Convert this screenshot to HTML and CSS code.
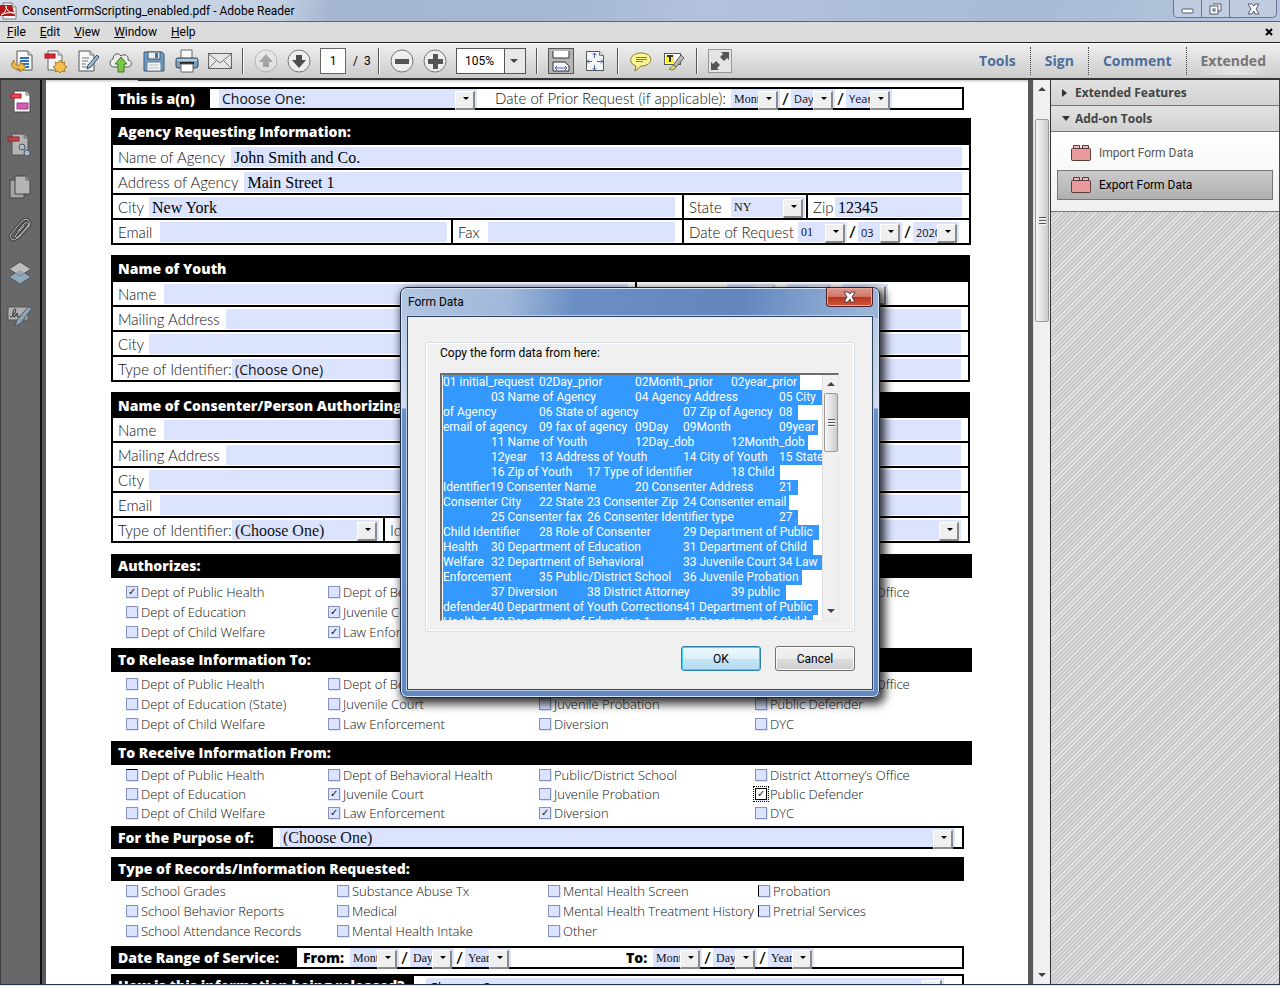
FILE: index.html
```html
<!DOCTYPE html>
<html lang="en">
<head>
    <meta charset="UTF-8">
    <meta name="viewport" content="width=device-width, initial-scale=1.0">
    <title>ConsentFormScripting_enabled.pdf - Adobe Reader</title>
    <link rel="stylesheet" href="styles.css">
</head>
<body>

    <header class="titlebar">
        <svg class="app-icon" width="17" height="18" viewBox="0 0 17 18"><path d="M3 1h9l4 4v12H3z" fill="#f4f4f4" stroke="#777"/><path d="M12 1v4h4" fill="#ddd" stroke="#888"/><path d="M0 3h12l3 11H0z" fill="#b3161b"/><path d="M1 13c4-2 6-6 5-9 0 4 4 7 8 7-5-1-9 0-13 2z" fill="none" stroke="#fff"/></svg>
        <span class="title">ConsentFormScripting_enabled.pdf - Adobe Reader</span>
        <div class="window-controls">
            <button aria-label="Minimize"><svg width="13" height="12" viewBox="0 0 13 12"><rect x="1" y="6" width="11" height="4" rx="1" fill="#fff" stroke="#4f5a70"/></svg></button>
            <button aria-label="Restore"><svg width="13" height="12" viewBox="0 0 13 12"><path d="M4 1h8v7H9" fill="#fff" stroke="#4f5a70"/><rect x="1" y="3" width="8" height="8" fill="#fff" stroke="#4f5a70"/><rect x="4" y="6" width="2" height="2" fill="#fff" stroke="#4f5a70"/></svg></button>
            <button class="close" aria-label="Close"><svg width="13" height="12" viewBox="0 0 13 12"><path d="M1 1h4l2 2 1-2h4L9 6l3 5H8L7 8l-2 3H1l3-5z" fill="#fff" stroke="#4f5a70"/></svg></button>
        </div>
    </header>

    <nav class="menubar">
        <button><u>F</u>ile</button>
        <button><u>E</u>dit</button>
        <button><u>V</u>iew</button>
        <button><u>W</u>indow</button>
        <button><u>H</u>elp</button>
        <button class="menu-close" aria-label="Close document"><svg width="8" height="8" viewBox="0 0 8 8"><path d="M1 1l6 6M7 1L1 7" stroke="#000" stroke-width="2"/></svg></button>
    </nav>

    <div class="toolbar">
        <button class="tool" aria-label="Open"><svg width="24" height="24" viewBox="0 0 24 24"><path d="M7 2h11l4 4v15H7z" fill="#f8f8f8" stroke="#555"/><path d="M18 2v4h4" fill="#ddd" stroke="#777"/><path d="M10 9h9M10 12h9M12 15h7M13 18h6" stroke="#2f6fc0" stroke-width="2"/><path d="M4 11c-5 5-2 10 6 9v3l6-5-6-5v3c-4 1-6-1-6-5z" fill="#f3bc45" stroke="#a3751a"/></svg></button>
        <button class="tool" aria-label="Create PDF"><svg width="24" height="24" viewBox="0 0 24 24"><path d="M5 2h10l4 4v15H5z" fill="#f4f4f4" stroke="#666"/><path d="M15 2v4h4" fill="#ddd" stroke="#888"/><rect x="2" y="5" width="10" height="4" fill="#e0252f" stroke="#9d1b22"/><path d="M17 11l2 3 3-1-1 3 3 2-3 2 1 3-3-1-2 2-2-2-3 1 1-3-3-2 3-2-1-3 3 1z" fill="#f5bf52" stroke="#b07c22"/></svg></button>
        <button class="tool" aria-label="Edit"><svg width="24" height="24" viewBox="0 0 24 24"><path d="M3 2h11l4 4v16H3z" fill="#f6f6f6" stroke="#555"/><path d="M14 2v4h4" fill="#ddd" stroke="#777"/><path d="M6 9h7M6 12h6M6 15h4M6 18h9" stroke="#777"/><path d="M21 6l2 2-8 10-4 2 1-4z" fill="#9cb8cf" stroke="#3d5468"/></svg></button>
        <button class="tool" aria-label="Upload"><svg width="24" height="24" viewBox="0 0 24 24"><path d="M5 18c-5 0-5-7-1-8 0-5 5-7 8-3 4-3 8 0 7 4 5 1 4 7 0 7z" fill="#eee" stroke="#555"/><path d="M12 8l6 7h-3v8H9v-8H6z" fill="#7cc64a" stroke="#3c7d1d"/></svg></button>
        <button class="tool" aria-label="Save"><svg width="24" height="24" viewBox="0 0 24 24"><path d="M2 3h18l2 2v17H2z" fill="#6e9cc4" stroke="#345a7c"/><rect x="6" y="3" width="12" height="7" fill="#e8eef3" stroke="#456"/><rect x="13" y="4" width="3" height="5" fill="#456f96"/><rect x="5" y="13" width="14" height="9" fill="#f6f6f6" stroke="#678"/><path d="M7 16h10M7 19h10" stroke="#bbb"/></svg></button>
        <button class="tool" aria-label="Print"><svg width="24" height="24" viewBox="0 0 24 24"><path d="M6 1h11v10H6z" fill="#fafafa" stroke="#666"/><rect x="1" y="9" width="22" height="10" rx="2" fill="#7b9fbf" stroke="#34495c"/><path d="M2 11h20" stroke="#b3cce0" stroke-width="2"/><path d="M5 14h14" stroke="#222" stroke-width="2"/><path d="M6 15h12v8H6z" fill="#fff" stroke="#666"/></svg></button>
        <button class="tool" aria-label="Email"><svg width="24" height="24" viewBox="0 0 24 24"><rect x="0.500" y="4.500" width="23" height="15" fill="#e6e6e6" stroke="#666"/><path d="M1 5l11 9 11-9M1 19l8-8M23 19l-8-8" fill="none" stroke="#777"/></svg></button>
        <span class="sep"></span>
        <button class="tool faded" aria-label="Previous page"><svg width="24" height="24" viewBox="0 0 24 24"><circle cx="12" cy="12" r="11" fill="#eee" stroke="#777"/><path d="M12 5l7 8h-4v5H9v-5H5z" fill="#555"/></svg></button>
        <button class="tool" aria-label="Next page"><svg width="24" height="24" viewBox="0 0 24 24"><circle cx="12" cy="12" r="11" fill="#eee" stroke="#777"/><path d="M12 19l7-8h-4V6H9v5H5z" fill="#4d4d4d"/></svg></button>
        <div class="pager">
            <input type="text" value="1" aria-label="Page number">
            <span>/&nbsp; 3</span>
        </div>
        <span class="sep"></span>
        <button class="tool" aria-label="Zoom out"><svg width="24" height="24" viewBox="0 0 24 24"><circle cx="12" cy="12" r="11" fill="#eee" stroke="#777"/><rect x="5" y="10" width="14" height="5" fill="#555"/></svg></button>
        <button class="tool" aria-label="Zoom in"><svg width="24" height="24" viewBox="0 0 24 24"><circle cx="12" cy="12" r="11" fill="#eee" stroke="#777"/><path d="M10 5h5v5h5v5h-5v5h-5v-5H5v-5h5z" fill="#555"/></svg></button>
        <div class="zoom-box">
            <select aria-label="Zoom level"><option>105%</option></select>
        </div>
        <span class="sep"></span>
        <button class="tool pressed" aria-label="Fit width"><svg width="24" height="24" viewBox="0 0 24 24"><path d="M4 2v7h16V2" fill="#fff" stroke="#333"/><path d="M4 22v-9h12l4 4v5z" fill="#f6f6f6" stroke="#333"/><path d="M6 19h12M8 17l-2 2 2 2M16 17l2 2-2 2" fill="none" stroke="#3f66b5"/></svg></button>
        <button class="tool" aria-label="Fit page"><svg width="24" height="24" viewBox="0 0 24 24"><path d="M3.500 2.500h13l4 4v15h-17z" fill="#f4f6fa" stroke="#555"/><path d="M16.500 2.500v4h4" fill="#ddd" stroke="#777"/><path d="M11.500 4v5M11.500 16v5M4 12.500h5M14 12.500h6M9.500 6l2-2 2 2M9.500 19l2 2 2-2M6 10.500l-2 2 2 2M18 10.500l2 2-2 2" fill="none" stroke="#3f66b5"/></svg></button>
        <span class="sep"></span>
        <button class="tool" aria-label="Add note"><svg width="24" height="24" viewBox="0 0 24 24"><path d="M12 4c13 0 13 13 0 13l-6 5 1-5C-2 14 1 4 12 4z" fill="#fbf494" stroke="#8a8028"/><path d="M7 8.500h11M7 10.500h11M7 12.500h7" stroke="#777"/></svg></button>
        <button class="tool" aria-label="Highlight text"><svg width="24" height="24" viewBox="0 0 24 24"><rect x="2.500" y="4.500" width="16" height="11" fill="#fff" stroke="#555"/><rect x="4" y="6" width="8" height="8" fill="#ffee2e"/><path d="M5 7h6M8 7v6" stroke="#333" stroke-width="2"/><path d="M19 6l3 3-8 9-3 1 1-4z" fill="#bbb" stroke="#555"/><path d="M7 20l5-4 2 3-4 2z" fill="#eee03c" stroke="#777"/></svg></button>
        <span class="sep"></span>
        <button class="tool" aria-label="Read mode"><svg width="24" height="24" viewBox="0 0 24 24"><rect x="0.500" y="0.500" width="23" height="23" fill="#e4e4e4" stroke="#999"/><path d="M13 3h8v8l-2-2-3 3-4-4 3-3zM3 13v8h8l-2-2 3-3-4-4-3 3z" fill="#555"/></svg></button>
        <div class="panes">
            <button>Tools</button>
            <button>Sign</button>
            <button>Comment</button>
            <button class="current">Extended</button>
        </div>
    </div>

    <main class="workspace">
        <nav class="rail">
            <button aria-label="Form"><svg width="24" height="24" viewBox="0 0 24 24"><path d="M5 2h12l4 4v17H5z" fill="#fff" stroke="#444"/><path d="M17 2v4h4" fill="#ddd" stroke="#777"/><rect x="2" y="5" width="10" height="4" fill="#f8414b" stroke="#b51e28"/><rect x="8" y="14" width="11" height="6" fill="#d25fb4" stroke="#963c80"/></svg></button>
            <button aria-label="Shared"><svg width="24" height="24" viewBox="0 0 24 24"><path d="M3 2h12l4 4v17H3z" fill="#b4b4b4" stroke="#555"/><path d="M15 2v4h4" fill="#999" stroke="#777"/><rect x="-1" y="5" width="11" height="4" fill="#c0464c" stroke="#84272c"/><path d="M13 15l5 5" stroke="#7f98ab" stroke-width="3"/><circle cx="13" cy="15" r="3" fill="#a9bccb" stroke="#556"/><circle cx="18" cy="21" r="3" fill="#a9bccb" stroke="#556"/></svg></button>
            <button aria-label="Pages"><svg width="24" height="24" viewBox="0 0 24 24"><path d="M1 5h14v18H1z" fill="#a4a4a4" stroke="#444"/><path d="M6 1h11l4 4v14H6z" fill="#b4b4b4" stroke="#444"/><path d="M17 1v4h4" fill="#999" stroke="#666"/></svg></button>
            <button aria-label="Attachments"><svg width="24" height="24" viewBox="0 0 24 24"><g fill="none" stroke-linecap="round"><path d="M9 13l6-7c3-3 6 0 4 2L8 20c-3 4-9 1-6-4L13 3c4-4 10 0 7 5L10 19c-2 2-5 0-3-2l8-9" stroke="#444" stroke-width="3"/><path d="M9 13l6-7c3-3 6 0 4 2L8 20c-3 4-9 1-6-4L13 3c4-4 10 0 7 5L10 19c-2 2-5 0-3-2l8-9" stroke="#c0c0c0"/></g></svg></button>
            <button aria-label="Layers"><svg width="24" height="24" viewBox="0 0 24 24"><path d="M11 9l11 7-11 7L0 16z" fill="#8fa8bb" stroke="#4c5a66"/><path d="M11 1l11 7-11 7L0 8z" fill="#bdbdbd" stroke="#555"/><path d="M11 9l5 3-5 3-5-3z" fill="#93a6b4"/></svg></button>
            <button aria-label="Signatures"><svg width="24" height="24" viewBox="0 0 24 24"><rect x="-1" y="3" width="20" height="13" fill="#b0b0b0" stroke="#555"/><path d="M1 13c5-1 7-8 5-8s-3 8-1 8 2-4 3-4-1 4 1 4 2-2 5-3" fill="none" stroke="#222"/><path d="M19 3l4 1-11 15-6 3 2-6z" fill="#8fa5b5" stroke="#4b5963"/></svg></button>
        </nav>

        <div class="viewer">
            <div class="page">
                <div class="clipped-mark"></div>

                <div class="strip first">
                    <h2>This is a(n)</h2>
                    <div class="strip-body">
                        <span class="combo wide sans"><select aria-label="Type of request"><option>Choose One:</option></select></span>
                        <span class="prior">Date of Prior Request (if applicable):</span>
                        <div class="date">
                            <span class="combo"><select aria-label="Prior month"><option>Month</option></select></span><i>/</i>
                            <span class="combo day sans"><select aria-label="Prior day"><option>Day</option></select></span><i>/</i>
                            <span class="combo year sans"><select aria-label="Prior year"><option>Year</option></select></span>
                        </div>
                    </div>
                </div>

                <section class="block agency">
                    <h2>Agency Requesting Information:</h2>
                    <div class="row">
                        <div class="cell"><label for="agency">Name of Agency</label><input id="agency" type="text" value="John Smith and Co."></div>
                    </div>
                    <div class="row">
                        <div class="cell"><label for="agency-address">Address of Agency</label><input id="agency-address" type="text" value="Main Street 1"></div>
                    </div>
                    <div class="row">
                        <div class="cell"><label class="short" for="agency-city">City</label><input id="agency-city" type="text" value="New York"></div>
                        <div class="cell state"><label for="state">State</label><span class="combo"><select id="state"><option>NY</option></select></span></div>
                        <div class="cell zip"><label for="zip">Zip</label><input id="zip" type="text" value="12345"></div>
                    </div>
                    <div class="row">
                        <div class="cell email"><label class="mid" for="agency-email">Email</label><input id="agency-email" type="text"></div>
                        <div class="cell fax"><label for="fax">Fax</label><input id="fax" type="text"></div>
                        <div class="cell request">
                            <span class="text">Date of Request</span>
                            <div class="date">
                                <span class="combo"><select aria-label="Request month"><option>01</option></select></span><i>/</i>
                                <span class="combo day sans"><select aria-label="Request day"><option>03</option></select></span><i>/</i>
                                <span class="combo year sans"><select aria-label="Request year"><option>2020</option></select></span>
                            </div>
                        </div>
                    </div>
                </section>

                <section class="block youth">
                    <h2>Name of Youth</h2>
                    <div class="row">
                        <div class="cell"><label class="name" for="youth">Name</label><input id="youth" type="text"></div>
                        <div class="cell birth">
                            <div class="date">
                                <span class="combo"><select aria-label="Birth month"><option></option></select></span><i>/</i>
                                <span class="combo day"><select aria-label="Birth day"><option></option></select></span><i>/</i>
                                <span class="combo year"><select aria-label="Birth year"><option></option></select></span>
                            </div>
                        </div>
                    </div>
                    <div class="row">
                        <div class="cell"><label for="youth-address">Mailing Address</label><input id="youth-address" type="text"></div>
                    </div>
                    <div class="row">
                        <div class="cell"><label class="short" for="youth-city">City</label><input id="youth-city" type="text"></div>
                    </div>
                    <div class="row">
                        <div class="cell"><label class="type" for="youth-id">Type of Identifier:</label><span class="combo fill sans"><select id="youth-id"><option>(Choose One)</option></select></span></div>
                        <div class="cell half"><input type="text" aria-label="Youth identifier"></div>
                    </div>
                </section>

                <section class="block consenter">
                    <h2>Name of Consenter/Person Authorizing:</h2>
                    <div class="row">
                        <div class="cell"><label class="name" for="consenter">Name</label><input id="consenter" type="text"></div>
                    </div>
                    <div class="row">
                        <div class="cell"><label for="consenter-address">Mailing Address</label><input id="consenter-address" type="text"></div>
                    </div>
                    <div class="row">
                        <div class="cell"><label class="short" for="consenter-city">City</label><input id="consenter-city" type="text"></div>
                    </div>
                    <div class="row">
                        <div class="cell"><label class="mid" for="consenter-email">Email</label><input id="consenter-email" type="text"></div>
                    </div>
                    <div class="row">
                        <div class="cell id-type"><label class="type" for="consenter-id">Type of Identifier:</label><span class="combo fill"><select id="consenter-id"><option>(Choose One)</option></select></span></div>
                        <div class="cell"><label for="role">Identifier</label><span class="combo fill"><select id="role"><option></option></select></span></div>
                    </div>
                </section>

                <section class="checks authorizes">
                    <h2>Authorizes:</h2>
                    <div class="grid">
                        <label><input type="checkbox" checked>Dept of Public Health</label>
                        <label><input type="checkbox">Dept of Behavioral Health</label>
                        <label><input type="checkbox">Public/District School</label>
                        <label><input type="checkbox">District Attorney’s Office</label>
                        <label><input type="checkbox">Dept of Education</label>
                        <label><input type="checkbox" checked>Juvenile Court</label>
                        <label><input type="checkbox">Juvenile Probation</label>
                        <label><input type="checkbox">Public Defender</label>
                        <label><input type="checkbox">Dept of Child Welfare</label>
                        <label><input type="checkbox" checked>Law Enforcement</label>
                        <label><input type="checkbox">Diversion</label>
                        <label><input type="checkbox">DYC</label>
                    </div>
                </section>

                <section class="checks release">
                    <h2>To Release Information To:</h2>
                    <div class="grid">
                        <label><input type="checkbox">Dept of Public Health</label>
                        <label><input type="checkbox">Dept of Behavioral Health</label>
                        <label><input type="checkbox">Public/District School</label>
                        <label><input type="checkbox">District Attorney’s Office</label>
                        <label><input type="checkbox">Dept of Education (State)</label>
                        <label><input type="checkbox">Juvenile Court</label>
                        <label><input type="checkbox">Juvenile Probation</label>
                        <label><input type="checkbox">Public Defender</label>
                        <label><input type="checkbox">Dept of Child Welfare</label>
                        <label><input type="checkbox">Law Enforcement</label>
                        <label><input type="checkbox">Diversion</label>
                        <label><input type="checkbox">DYC</label>
                    </div>
                </section>

                <section class="checks receive">
                    <h2>To Receive Information From:</h2>
                    <div class="grid">
                        <label><input class="edge-top" type="checkbox">Dept of Public Health</label>
                        <label><input type="checkbox">Dept of Behavioral Health</label>
                        <label><input type="checkbox">Public/District School</label>
                        <label><input type="checkbox">District Attorney’s Office</label>
                        <label><input type="checkbox">Dept of Education</label>
                        <label><input type="checkbox" checked>Juvenile Court</label>
                        <label><input type="checkbox">Juvenile Probation</label>
                        <label><input class="focused" type="checkbox" checked>Public Defender</label>
                        <label><input type="checkbox">Dept of Child Welfare</label>
                        <label><input type="checkbox" checked>Law Enforcement</label>
                        <label><input type="checkbox" checked>Diversion</label>
                        <label><input type="checkbox">DYC</label>
                    </div>
                </section>

                <div class="strip purpose">
                    <h2>For the Purpose of:</h2>
                    <div class="strip-body">
                        <span class="combo fill"><select aria-label="Purpose"><option>(Choose One)</option></select></span>
                    </div>
                </div>

                <section class="checks records">
                    <h2>Type of Records/Information Requested:</h2>
                    <div class="grid">
                        <label><input type="checkbox">School Grades</label>
                        <label><input type="checkbox">Substance Abuse Tx</label>
                        <label><input type="checkbox">Mental Health Screen</label>
                        <label><input class="edge-left" type="checkbox">Probation</label>
                        <label><input type="checkbox">School Behavior Reports</label>
                        <label><input type="checkbox">Medical</label>
                        <label><input type="checkbox">Mental Health Treatment History</label>
                        <label><input class="edge-left" type="checkbox">Pretrial Services</label>
                        <label><input type="checkbox">School Attendance Records</label>
                        <label><input type="checkbox">Mental Health Intake</label>
                        <label><input type="checkbox">Other</label>
                    </div>
                </section>

                <div class="strip range">
                    <h2>Date Range of Service:</h2>
                    <div class="strip-body">
                        <b>From:</b>
                        <div class="date">
                            <span class="combo"><select aria-label="From month"><option>Month</option></select></span><i>/</i>
                            <span class="combo day"><select aria-label="From day"><option>Day</option></select></span><i>/</i>
                            <span class="combo year"><select aria-label="From year"><option>Year</option></select></span>
                        </div>
                        <b class="to">To:</b>
                        <div class="date">
                            <span class="combo"><select aria-label="To month"><option>Month</option></select></span><i>/</i>
                            <span class="combo day"><select aria-label="To day"><option>Day</option></select></span><i>/</i>
                            <span class="combo year"><select aria-label="To year"><option>Year</option></select></span>
                        </div>
                    </div>
                </div>

                <div class="strip how">
                    <h2>How is this information being released?</h2>
                    <div class="strip-body">
                        <span class="combo fill sans"><select aria-label="How released"><option>Choose One:</option></select></span>
                    </div>
                </div>
            </div>
            <div class="scrollbar">
                <span class="arrow up"></span>
                <span class="thumb"></span>
                <span class="arrow down"></span>
            </div>
        </div>

        <aside class="side">
            <button class="side-head"><span class="tri right"></span>Extended Features</button>
            <button class="side-head"><span class="tri"></span>Add-on Tools</button>
            <div class="side-list">
                <button><svg width="20" height="16" viewBox="0 0 20 16"><path d="M2.500 4V0.500h6V4M11.500 4V0.500h6V4" fill="#f3b9b9" stroke="#5b3a3c"/><rect x="0.500" y="3.500" width="19" height="12" rx="1" fill="#e99a9c" stroke="#5b3a3c"/></svg>Import Form Data</button>
                <button class="active"><svg width="20" height="16" viewBox="0 0 20 16"><path d="M2.500 4V0.500h6V4M11.500 4V0.500h6V4" fill="#f3b9b9" stroke="#5b3a3c"/><rect x="0.500" y="3.500" width="19" height="12" rx="1" fill="#e99a9c" stroke="#5b3a3c"/></svg>Export Form Data</button>
            </div>
        </aside>
    </main>

    <div class="dialog" role="dialog" aria-label="Form Data">
        <div class="dialog-title">
            <span>Form Data</span>
            <button aria-label="Close dialog"><svg width="13" height="12" viewBox="0 0 13 12"><path d="M1 1h4l2 2 1-2h4L9 6l3 5H8L7 8l-2 3H1l3-5z" fill="#fff" stroke="#5b3a42"/></svg></button>
        </div>
        <div class="dialog-body">
            <div class="group">
                <label for="data">Copy the form data from here:</label>
                <div class="text-frame">
<textarea id="data" readonly wrap="off">01 initial_request	02Day_prior	02Month_prior	02year_prior
	03 Name of Agency	04 Agency Address	05 City 
of Agency	06 State of agency	07 Zip of Agency	08 
email of agency	09 fax of agency	09Day	09Month	09year
	11 Name of Youth	12Day_dob	12Month_dob
	12year	13 Address of Youth	14 City of Youth	15 State
	16 Zip of Youth	17 Type of Identifier	18 Child 
Identifier19 Consenter Name	20 Consenter Address	21 
Consenter City	22 State	23 Consenter Zip	24 Consenter email
	25 Consenter fax	26 Consenter Identifier type	27 
Child Identifier	28 Role of Consenter	29 Department of Public 
Health	30 Department of Education	31 Department of Child 
Welfare	32 Department of Behavioral	33 Juvenile Court	34 Law 
Enforcement	35 Public/District School	36 Juvenile Probation
	37 Diversion	38 District Attorney	39 public 
defender40 Department of Youth Corrections41 Department of Public 
Health 1	42 Department of Education 1	43 Department of Child 
</textarea>
                    <div class="scrollbar small">
                        <span class="arrow up"></span>
                        <span class="thumb"></span>
                        <span class="arrow down"></span>
                    </div>
                </div>
            </div>
            <div class="actions">
                <button class="default">OK</button>
                <button>Cancel</button>
            </div>
        </div>
    </div>

    <script>
        // the data is ready to copy as soon as the dialog opens
        var data = document.getElementById("data");
        data.focus();
        data.setSelectionRange(0, data.value.length);
        data.scrollTop = 0;
    </script>
</body>
</html>
```
FILE: styles.css
```css
* {
    box-sizing: border-box;
}

body {
    margin: 0;
    height: 100vh;
    display: flex;
    flex-direction: column;
    overflow: hidden;
    font-family: Roboto, "Open Sans", sans-serif;
    font-size: 12px;
    color: #000;
    background: #c5d3e6;
    border-bottom: 1px solid #dfe6f0;
}

button, input, select, textarea {
    font: inherit;
    color: inherit;
    margin: 0;
    padding: 0;
    border: 0;
    border-radius: 0;
    background: none;
    outline: 0;
}

h2 {
    margin: 0;
    padding: 0 7px;
    font-family: "Open Sans", sans-serif;
    font-size: 14px;
    font-weight: 800;
    line-height: 24px;
    color: #fff;
    background: #000;
    white-space: nowrap;
}

/* title bar */
.titlebar {
    display: flex;
    align-items: center;
    flex: none;
    height: 22px;
    border-bottom: 1px solid #5a6378;
    background: linear-gradient(100deg, #d3dce8 0, #c3d0e2 22%, #a3b5cf 26%, #a6b8d2 45%, #b2c2dc 55%, #a8bad6 80%, #a9bbd5 82%, #b6c6de 100%);
}

.title {
    margin-left: 5px;
    flex: 1;
}

.window-controls {
    display: flex;
    align-self: flex-start;
    height: 18px;
    margin-right: 3px;
    border: 1px solid #68758d;
    border-top: 0;
    border-radius: 0 0 5px 5px;
    background: #c0cde0;
}

.window-controls button {
    width: 28px;
    border-right: 1px solid #68758d;
    line-height: 0;
}

.window-controls .close {
    width: 46px;
    border: 0;
}

/* menu */
.menubar {
    display: flex;
    flex: none;
    height: 21px;
    padding: 0 7px;
    gap: 14px;
    background: #dcdcdc;
    border-bottom: 1px solid #222;
}

.menubar .menu-close {
    margin-left: auto;
}

/* toolbar */
.toolbar {
    display: flex;
    align-items: center;
    flex: none;
    gap: 9px;
    height: 37px;
    padding-left: 10px;
    border-bottom: 2px solid #333;
    box-shadow: inset 0 1px 0 #fff;
    background: linear-gradient(#f0f0f0, #cbcbcb);
}

.tool {
    flex: none;
    width: 24px;
    height: 24px;
    line-height: 0;
}

.tool.faded {
    opacity: 0.4;
}

.tool.pressed {
    width: 26px;
    height: 26px;
    border: 1px solid #555;
    background: #b5b5b5;
}

.sep {
    width: 2px;
    height: 26px;
    margin: 0 1px;
    border-left: 1px solid #555;
    border-right: 1px solid #f8f8f8;
}

.pager {
    display: flex;
    align-items: center;
    gap: 7px;
}

.pager input {
    width: 26px;
    height: 26px;
    border: 1px solid #666;
    background: #fff;
    text-align: center;
}

.pager span {
    width: 15px;
    white-space: nowrap;
}

.zoom-box {
    position: relative;
    width: 70px;
    height: 26px;
    border: 1px solid #555;
    background: linear-gradient(90deg, #fff 47px, #555 47px, #555 48px, #e8e8e8 48px);
}

.zoom-box select {
    appearance: none;
    width: 100%;
    height: 24px;
    padding-left: 8px;
}

.zoom-box::after {
    content: "";
    position: absolute;
    right: 7px;
    top: 10px;
    border: 4px solid transparent;
    border-top-color: #444;
    border-bottom: 0;
    pointer-events: none;
}

.panes {
    display: flex;
    margin-left: auto;
    height: 28px;
}

.panes button {
    padding: 0 14px;
    font-family: "Open Sans", sans-serif;
    font-size: 14px;
    font-weight: 700;
    color: #4b6d9c;
    border-left: 1px dotted #444;
}

.panes button:first-child {
    border: 0;
}

.panes .current {
    color: #757575;
    background: radial-gradient(ellipse at 50% 120%, #ececec, transparent 60%);
}

/* workspace */
.workspace {
    display: flex;
    flex: 1;
    min-height: 0;
    border-bottom: 1px solid #26364f;
}

.rail {
    display: flex;
    flex-direction: column;
    align-items: center;
    flex: none;
    gap: 19px;
    width: 42px;
    padding: 9px 0;
    background: #686868;
    border-left: 1px solid #3c3c3c;
    border-right: 2px solid #111;
}

.rail button {
    width: 24px;
    height: 24px;
    line-height: 0;
}

.rail svg {
    overflow: visible;
}

.viewer {
    display: flex;
    flex: 1;
    min-width: 0;
    padding-left: 4px;
    background: #595959;
    overflow: hidden;
}

.page {
    flex: 1;
    min-width: 0;
    padding: 0 56px 0 65px;
    margin-right: 5px;
    background: #fff;
    box-shadow: inset 0 3px 3px -2px #bbb;
    font-family: Lato, "Open Sans", sans-serif;
    font-size: 15px;
    font-weight: 300;
    color: #111;
}

.clipped-mark {
    width: 22px;
    height: 1px;
    margin-left: 27px;
    background: #333;
}

/* one-line boxes with a black caption */
.strip {
    display: flex;
    margin-right: 8px;
    height: 23px;
    border: 2px solid #000;
    border-left: 0;
}

.strip h2 {
    line-height: 20px;
}

.strip-body {
    display: flex;
    flex: 1;
    min-width: 0;
    align-items: stretch;
}

.strip.first {
    margin-top: 6px;
    padding: 0;
}

.first h2 {
    width: 99px;
    margin: -2px 0;
    line-height: 23px;
}

.first .strip-body {
    padding-left: 9px;
}

.first .date {
    margin-left: 9px;
}

.prior {
    width: 227px;
    margin-left: 18px;
    line-height: 19px;
    white-space: nowrap;
}

.purpose h2 {
    width: 162px;
}

.purpose .strip-body {
    padding: 0 7px;
}

.range h2 {
    width: 186px;
}

.range b {
    width: 47px;
    margin-left: 6px;
    font-family: "Open Sans", sans-serif;
    font-size: 14px;
    font-weight: 800;
    line-height: 19px;
    color: #000;
}

.range .to {
    width: 27px;
    margin-left: 115px;
}

.how h2 {
    width: 303px;
}

.how .strip-body {
    padding: 2px 18px 0 12px;
}

/* bordered blocks of rows */
.block {
    border-left: 2px solid #000;
    border-right: 2px solid #000;
    margin-right: 1px;
}

.block h2 {
    height: 27px;
    padding: 0 5px;
    line-height: 28px;
}

.agency {
    margin-top: 8px;
}

.youth {
    margin: 10px 2px 0 0;
}

.consenter {
    margin: 10px 2px 0 0;
}

.consenter h2 {
    height: 26px;
}

.row {
    display: flex;
    height: 25px;
    border-bottom: 2px solid #000;
}

.cell {
    display: flex;
    flex: 1;
    min-width: 0;
    padding: 2px 7px 1px 5px;
}

.cell + .cell {
    border-left: 2px solid #000;
}

.cell label, .cell .text {
    flex: none;
    margin-right: 6px;
    line-height: 20px;
    white-space: nowrap;
}

.cell .short {
    width: 25px;
}

.cell .mid {
    width: 36px;
}

.cell .name {
    width: 40px;
}

.cell .type {
    width: 112px;
    margin-right: 2px;
}

.cell > input {
    flex: 1;
    min-width: 0;
    height: 20px;
    padding: 1px 3px 0;
    background: #dbe3ff;
    font-family: "Liberation Serif", serif;
    font-size: 16px;
    font-weight: 400;
    color: #000;
}

.cell.state {
    flex: none;
    width: 124px;
    padding-right: 1px;
}

.cell.state label {
    width: 36px;
}

.state .combo {
    flex: 1;
}

.cell.zip {
    flex: none;
    width: 163px;
}

.cell.zip label {
    width: 21px;
    margin-right: 1px;
}

.cell.email {
    flex: none;
    width: 338px;
    padding-right: 4px;
}

.cell.fax label {
    width: 24px;
}

.cell.request {
    flex: none;
    width: 287px;
}

.request .text {
    width: 103px;
}

.cell.birth {
    flex: none;
    width: 333px;
    padding-left: 90px;
}

.cell.half {
    flex: none;
    width: 333px;
}

.cell.id-type {
    flex: none;
    width: 270px;
    padding-right: 4px;
}

/* drop-downs of the form */
.combo {
    position: relative;
    display: flex;
    flex: none;
    width: 49px;
    background: #dbe3ff;
    font-family: "Liberation Serif", serif;
    font-size: 12px;
    font-weight: 400;
    color: #111;
}

.combo.day {
    width: 44px;
}

.combo.year {
    width: 46px;
}

.combo.wide {
    width: 258px;
}

.combo.fill {
    flex: 1;
    width: auto;
    font-size: 16px;
}

.combo.sans {
    font-family: "Open Sans", sans-serif;
    font-size: 11px;
}

.combo.wide.sans, .combo.fill.sans {
    font-size: 14px;
}

.combo select {
    appearance: none;
    flex: 1;
    min-width: 0;
    width: 100%;
    padding: 0 12px 0 3px;
}

.combo::before {
    content: "";
    position: absolute;
    right: 2px;
    top: 2px;
    width: 17px;
    height: 16px;
    border: 1px solid #fff;
    border-right: 2px solid #8a8a8a;
    border-bottom: 2px solid #8a8a8a;
    background: #efefef;
    pointer-events: none;
}

.combo::after {
    content: "";
    position: absolute;
    right: 8px;
    top: 8px;
    border: 3px solid transparent;
    border-top-color: #000;
    border-bottom: 0;
    pointer-events: none;
}

.date {
    display: flex;
    flex: none;
}

.date i {
    width: 11px;
    text-align: center;
    line-height: 19px;
    font-style: normal;
    font-weight: 700;
    color: #000;
}

/* check boxes */
.checks.authorizes {
    margin-top: 11px;
}

.grid {
    display: grid;
    grid-template-columns: 202px 211px 216px 1fr;
    grid-auto-rows: 20px;
    padding-left: 15px;
    font-family: "Open Sans", sans-serif;
    font-size: 13px;
}

.authorizes .grid {
    padding-top: 4px;
    padding-bottom: 6px;
}

.release .grid {
    padding-top: 2px;
    padding-bottom: 7px;
}

.receive .grid {
    grid-auto-rows: 19px;
    padding-bottom: 4px;
}

.records {
    margin: 8px 8px 0 0;
}

.records .grid {
    grid-template-columns: 211px 211px 210px 1fr;
    padding-bottom: 5px;
}

.grid label {
    display: flex;
    align-items: center;
    gap: 3px;
    white-space: nowrap;
}

.grid input {
    appearance: none;
    position: relative;
    flex: none;
    width: 12px;
    height: 12px;
    border: 1px solid #8590bd;
    background: #dbe3ff;
    box-shadow: 1px 1px 0 #dbe3ff;
}

.grid input:checked::after {
    content: "✓";
    position: absolute;
    left: 1px;
    top: -1px;
    font-family: "DejaVu Sans", sans-serif;
    font-size: 10px;
    font-weight: 700;
    line-height: 12px;
    color: #111;
}

.grid .edge-top {
    border-top-color: #000;
}

.grid .edge-left {
    border-left-color: #000;
}

.grid .focused {
    border-color: #000;
    background: #fff;
    outline: 1px dotted #000;
    outline-offset: 1px;
}

.records + .strip {
    margin-bottom: 5px;
}

/* scroll bars */
.scrollbar {
    display: flex;
    flex-direction: column;
    align-items: center;
    flex: none;
    width: 17px;
    padding: 7px 0;
    background: #f0f0f0;
    border-left: 1px solid #ddd;
}

.thumb {
    position: relative;
    width: 14px;
    height: 203px;
    margin-top: 28px;
    border: 1px solid #999;
    border-radius: 2px;
    background: linear-gradient(90deg, #f6f6f6, #e2e2e2 50%, #c9c9cc);
}

.thumb::after {
    content: "";
    position: absolute;
    left: 3px;
    top: calc(50% - 4px);
    width: 7px;
    height: 8px;
    background: repeating-linear-gradient(#555 0, #555 1px, #fff 1px, #ddd 3px);
}

.arrow {
    border: 4px solid transparent;
}

.arrow.up {
    border-top: 0;
    border-bottom-color: #444;
}

.arrow.down {
    margin-top: auto;
    border-bottom: 0;
    border-top-color: #444;
}

/* right pane */
.side {
    flex: none;
    width: 230px;
    border-left: 1px solid #333;
    border-right: 1px solid #444;
    background: repeating-linear-gradient(135deg, #c9c9c9 0, #c9c9c9 2px, #e6e6e6 2px, #e6e6e6 3px);
}

.side-head {
    display: flex;
    align-items: center;
    width: 100%;
    height: 26px;
    padding-left: 11px;
    font-family: "Open Sans", sans-serif;
    font-weight: 700;
    color: #444;
    border-bottom: 1px solid #777;
    background: linear-gradient(#e2e2e2, #d2d2d2);
}

.tri {
    width: 8px;
    margin-right: 5px;
    border: 4px solid transparent;
    border-top: 5px solid #333;
    border-bottom: 0;
}

.tri.right {
    width: 5px;
    margin-right: 8px;
    border: 4px solid transparent;
    border-left: 5px solid #333;
    border-right: 0;
}

.side-list {
    padding: 6px 6px 11px;
    background: linear-gradient(#fff, #f0f0f0);
    border-bottom: 1px solid #777;
}

.side-list button {
    display: flex;
    align-items: center;
    gap: 8px;
    width: 100%;
    height: 30px;
    padding-left: 13px;
    margin-bottom: 2px;
    border: 1px solid transparent;
    color: #555;
}

.side-list .active {
    margin: 0;
    color: #000;
    border-color: #777;
    background: linear-gradient(#cbcbcb, #b0b0b0);
}

/* dialog window over the document */
.dialog {
    position: absolute;
    left: calc(50% - 240px);
    top: 287px;
    width: 480px;
    padding: 0 6px 7px;
    border: 1px solid #1d2a40;
    border-radius: 7px;
    background: linear-gradient(#0000 0, #0000 30px, #b9cce5 30px, #cfdcec 120px, #6a90c6 121px, #6288bf),
        linear-gradient(100deg, #b3c6e2 0, #a0b8da 20%, #6a8fc4 32%, #6086bd 62%, #9ab4d9 85%, #a9c0e0);
    box-shadow: inset 0 0 0 1px #d6e3f4, 3px 4px 10px 2px rgba(0, 0, 0, 0.8);
}

.dialog-title {
    display: flex;
    justify-content: space-between;
    height: 28px;
    padding-left: 1px;
    line-height: 28px;
}

.dialog-title button {
    width: 47px;
    height: 19px;
    line-height: 0;
    border: 1px solid #4c2029;
    border-top: 0;
    border-radius: 0 0 4px 4px;
    box-shadow: inset 0 0 0 1px #e7a79d;
    background: linear-gradient(#df9a8d 0, #d07565 50%, #b6361f 51%, #d0563a);
}

.dialog-body {
    padding: 25px 17px 18px;
    border: 1px solid #2c3f5e;
    box-shadow: 0 0 0 1px #bcd0ea;
    background: #f0f0f0;
}

.group {
    height: 290px;
    padding: 0 15px 10px 14px;
    border: 1px solid #d5dfe5;
    border-radius: 3px;
    box-shadow: inset 0 0 0 1px #fff;
}

.group label {
    display: block;
    height: 30px;
    line-height: 20px;
}

.text-frame {
    display: flex;
    height: 248px;
    border: 1px solid #e8e8e8;
    border-top: 2px solid #6d6d6d;
    border-left: 2px solid #6d6d6d;
    background: #fff;
}

.text-frame textarea {
    flex: 1;
    min-width: 0;
    height: 245px;
    padding-left: 1px;
    line-height: 15px;
    resize: none;
    overflow: hidden;
    white-space: pre;
    tab-size: 48px;
}

.text-frame textarea::selection {
    color: #fff;
    background: #3399ff;
}

.scrollbar.small {
    width: 16px;
}

.small .thumb {
    height: 59px;
    margin-top: 7px;
}

.actions {
    display: flex;
    justify-content: flex-end;
    gap: 14px;
    margin-top: 14px;
}

.actions button {
    width: 80px;
    height: 25px;
    border: 1px solid #707070;
    border-radius: 3px;
    background: linear-gradient(#f2f2f2 0, #ebebeb 50%, #ddd 51%, #cfcfcf);
    box-shadow: inset 0 0 0 1px #fcfcfc;
}

.actions .default {
    border-color: #2c7fb0;
    background: linear-gradient(#eef7fb 0, #dcf0fa 50%, #c4e5f6 51%, #b4dcf2);
    box-shadow: inset 0 0 0 1px #3fd0fb;
}
```
